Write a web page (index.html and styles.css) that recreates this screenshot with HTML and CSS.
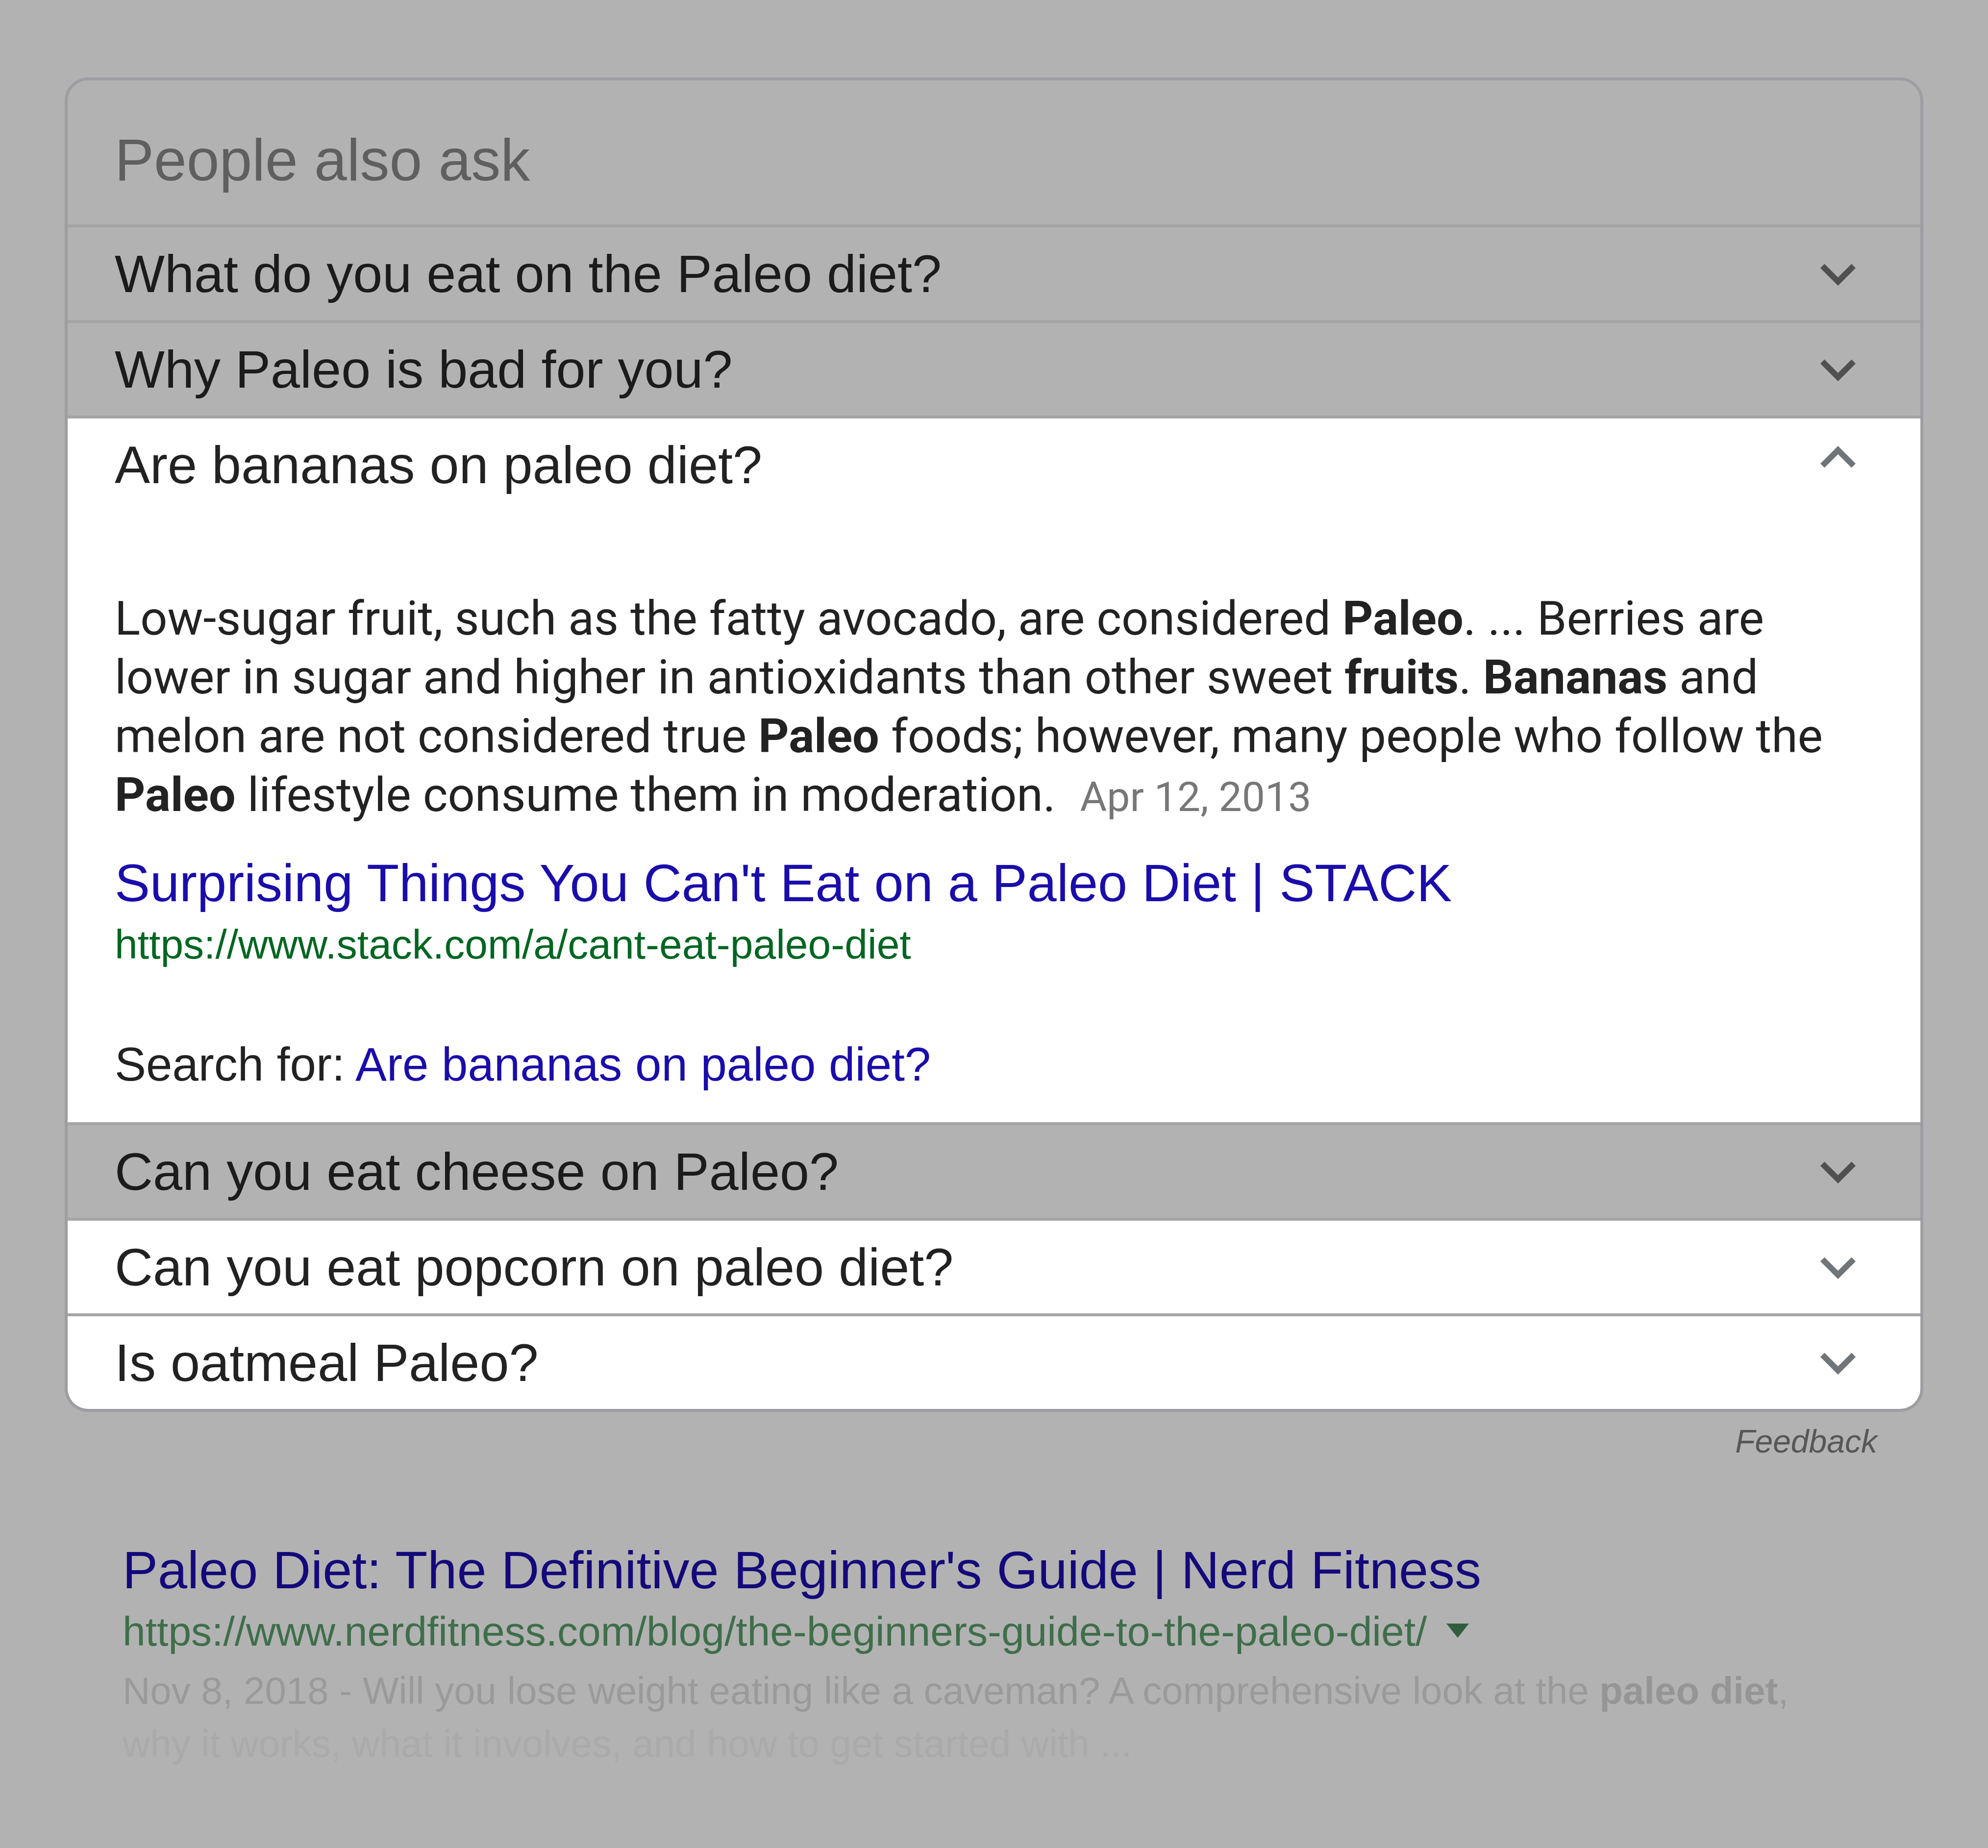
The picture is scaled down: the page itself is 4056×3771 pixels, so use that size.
FILE: index.html
```html
<!DOCTYPE html>
<html lang="en">
<head>
<meta charset="utf-8">
<title>People also ask</title>
<link rel="stylesheet" href="styles.css">
</head>
<body>
<div class="page">
  <div class="paa">
    <div class="paa-head">People also ask</div>

    <div class="q q--dim">
      <span class="q-text">What do you eat on the Paleo diet?</span>
      <svg class="chev" viewBox="0 0 24 24"><path d="M16.59 8.59L12 13.17 7.41 8.59 6 10l6 6 6-6z"/></svg>
    </div>

    <div class="q q--dim">
      <span class="q-text">Why Paleo is bad for you?</span>
      <svg class="chev" viewBox="0 0 24 24"><path d="M16.59 8.59L12 13.17 7.41 8.59 6 10l6 6 6-6z"/></svg>
    </div>

    <div class="open">
      <div class="q q--head">
        <span class="q-text">Are bananas on paleo diet?</span>
        <svg class="chev chev--up" viewBox="0 0 24 24"><path d="M12 8l-6 6 1.41 1.41L12 10.83l4.59 4.58L18 14z"/></svg>
      </div>
      <div class="answer">
        <p class="snippet">Low-sugar fruit, such as the fatty avocado, are considered <b>Paleo</b>. ... Berries are lower in sugar and higher in antioxidants than other sweet <b>fruits</b>. <b>Bananas</b> and melon are not considered true <b>Paleo</b> foods; however, many people who follow the <b>Paleo</b> lifestyle consume them in moderation. <span class="date">Apr 12, 2013</span></p>
        <a class="ans-title" href="#">Surprising Things You Can't Eat on a Paleo Diet | STACK</a>
        <div class="ans-url">https://www.stack.com/a/cant-eat-paleo-diet</div>
        <div class="search-for">Search for: <a class="search-link" href="#">Are bananas on paleo diet?</a></div>
      </div>
    </div>

    <div class="q q--dim">
      <span class="q-text">Can you eat cheese on Paleo?</span>
      <svg class="chev" viewBox="0 0 24 24"><path d="M16.59 8.59L12 13.17 7.41 8.59 6 10l6 6 6-6z"/></svg>
    </div>

    <div class="q">
      <span class="q-text">Can you eat popcorn on paleo diet?</span>
      <svg class="chev" viewBox="0 0 24 24"><path d="M16.59 8.59L12 13.17 7.41 8.59 6 10l6 6 6-6z"/></svg>
    </div>

    <div class="q">
      <span class="q-text">Is oatmeal Paleo?</span>
      <svg class="chev" viewBox="0 0 24 24"><path d="M16.59 8.59L12 13.17 7.41 8.59 6 10l6 6 6-6z"/></svg>
    </div>
  </div>

  <div class="feedback">Feedback</div>

  <div class="result">
    <a class="res-title" href="#">Paleo Diet: The Definitive Beginner's Guide | Nerd Fitness</a>
    <div class="res-url">https://www.nerdfitness.com/blog/the-beginners-guide-to-the-paleo-diet/<span class="res-arrow"></span></div>
    <p class="res-desc"><span class="desc-l1">Nov 8, 2018 - Will you lose weight eating like a caveman? A comprehensive look at the <b>paleo diet</b>,</span> <span class="desc-l2">why it works, what it involves, and how to get started with ...</span></p>
  </div>
</div>
</body>
</html>
```

FILE: styles.css
```css
* {
  box-sizing: content-box;
}

html, body {
  margin: 0;
  padding: 0;
  background: #b2b2b2;
}

body {
  font-family: "Liberation Sans", Arial, sans-serif;
  overflow: hidden;
}

.page {
  padding: 158px 132px 0;
}

.paa {
  border: 6px solid #9d9ea2;
  border-radius: 48px;
  overflow: hidden;
}

.paa-head {
  font-size: 120px;
  line-height: 138px;
  color: #5f5f5f;
  padding: 93px 96px 63px;
}

.q {
  display: flex;
  align-items: center;
  justify-content: space-between;
  height: 189px;
  padding: 0 96px;
  border-top: 6px solid #a4a4a4;
  background: #ffffff;
  color: #222222;
  font-size: 108px;
  line-height: 124px;
}

.q--dim {
  background: #b2b2b2;
  color: #1b1b1b;
}

.q--head {
  border-top: 0;
}

.chev {
  flex: none;
  width: 144px;
  height: 144px;
  fill: #70757a;
}

.q--dim .chev {
  fill: #505050;
}

.chev--up {
  margin-top: -30px;
}

.open {
  border-top: 6px solid #a4a4a4;
  background: #ffffff;
}

.answer {
  padding: 159px 96px 63px;
}

.snippet {
  margin: 0;
  font-family: Roboto, "Liberation Sans", Arial, sans-serif;
  font-size: 97px;
  line-height: 120px;
  color: #222222;
}

.snippet b {
  font-weight: 700;
}

.date {
  font-size: 84px;
  color: #777777;
  margin-left: 26px;
}

.ans-title {
  display: block;
  margin-top: 53px;
  font-size: 108px;
  line-height: 124px;
  color: #1a0dab;
  text-decoration: none;
}

.ans-url {
  margin-top: 15px;
  font-size: 84px;
  line-height: 96px;
  color: #006621;
}

.search-for {
  margin-top: 142px;
  font-size: 96px;
  line-height: 110px;
  color: #222222;
}

.search-link {
  color: #1a0dab;
  text-decoration: none;
}

.feedback {
  margin-top: 22px;
  padding-right: 94px;
  text-align: right;
  font-style: italic;
  font-size: 66px;
  line-height: 76px;
  color: #575757;
}

.result {
  margin-top: 163px;
  padding-left: 118px;
  max-width: 3480px;
}

.res-title {
  display: block;
  font-size: 108px;
  line-height: 124px;
  color: #14097a;
  text-decoration: none;
}

.res-url {
  margin-top: 15px;
  font-size: 84px;
  line-height: 96px;
  color: #3e6e4a;
}

.res-arrow {
  display: inline-block;
  width: 0;
  height: 0;
  margin-left: 40px;
  border-left: 23px solid transparent;
  border-right: 23px solid transparent;
  border-top: 29px solid #2f5e3c;
  vertical-align: 16px;
}

.res-desc {
  margin: 19px 0 0;
  font-size: 78px;
  line-height: 108px;
}

.desc-l1 {
  display: block;
  color: #9a9a9a;
}

.desc-l1 b {
  color: #959595;
}

.desc-l2 {
  display: block;
  color: #aaaaaa;
}
```
